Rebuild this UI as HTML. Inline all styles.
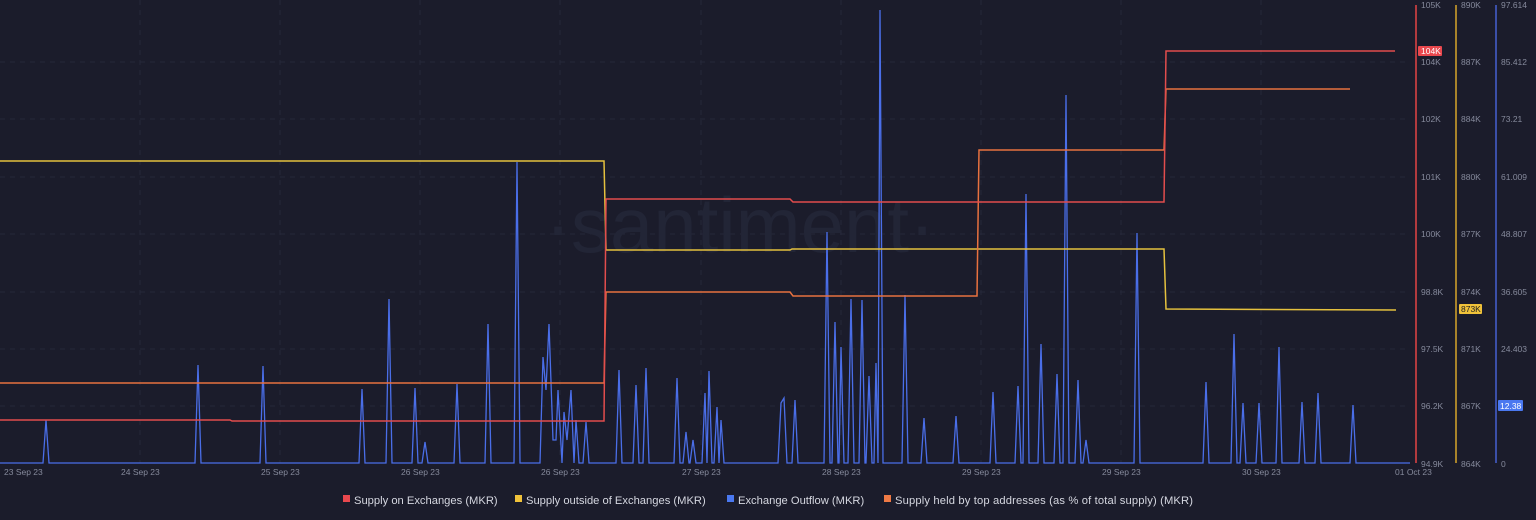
<!DOCTYPE html>
<html><head><meta charset="utf-8"><style>
html,body{margin:0;padding:0;background:#1b1c2b;width:1536px;height:520px;overflow:hidden;font-family:"Liberation Sans",sans-serif}
svg text{font-family:"Liberation Sans",sans-serif}
</style></head><body>
<svg width="1536" height="520" xmlns="http://www.w3.org/2000/svg">
<rect width="1536" height="520" fill="#1b1c2b"/>
<g stroke="#262839" stroke-width="1" stroke-dasharray="5,5">
<line x1="0" y1="62" x2="1410" y2="62"/><line x1="0" y1="119" x2="1410" y2="119"/><line x1="0" y1="177" x2="1410" y2="177"/><line x1="0" y1="234" x2="1410" y2="234"/><line x1="0" y1="292" x2="1410" y2="292"/><line x1="0" y1="349" x2="1410" y2="349"/><line x1="0" y1="406" x2="1410" y2="406"/>
<line x1="140" y1="0" x2="140" y2="463"/><line x1="280" y1="0" x2="280" y2="463"/><line x1="420" y1="0" x2="420" y2="463"/><line x1="560" y1="0" x2="560" y2="463"/><line x1="701" y1="0" x2="701" y2="463"/><line x1="841" y1="0" x2="841" y2="463"/><line x1="981" y1="0" x2="981" y2="463"/><line x1="1121" y1="0" x2="1121" y2="463"/><line x1="1261" y1="0" x2="1261" y2="463"/>
</g>
<text x="740" y="252" font-size="78" fill="#222536" text-anchor="middle" font-family="DejaVu Sans, sans-serif" font-weight="300">·santiment·</text>
<polyline fill="none" stroke="#4a6ee8" stroke-width="1.3" points="0,463 43,463 46,420 49,463 195,463 198,365 201,463 260,463 263,366 266,463 359,463 362,389 365,463 386,463 389,299 392,463 412,463 415,388 418,463 422,463 425,442 428,463 454,463 457,384 460,463 485,463 488,324 491,463 514,463 517,162 520,463 540,463 543,357 546,390 549,324 553,440 556,440 558,390 562,463 564,412 567,440 571,390 574,463 576,420 579,463 583,463 586,422 589,463 616,463 619,370 622,463 633,463 636,385 639,463 643,463 646,368 649,463 674,463 677,378 680,463 683,463 686,432 689,463 690,463 693,440 696,463 702,463 705,393 707,463 709,371 712,463 714,463 717,407 719,463 721,420 724,463 778,463 781,403 784,398 787,463 792,463 795,400 798,463 824,463 827,232 830,463 832,463 835,322 838,463 839,463 841,347 844,463 848,463 851,299 854,463 859,463 862,300 865,463 866,463 869,376 872,463 874,463 876,363 878,463 880,10 883,463 902,463 905,295 908,463 921,463 924,418 927,463 953,463 956,416 959,463 990,463 993,392 996,463 1015,463 1018,386 1021,463 1023,463 1026,194 1029,463 1038,463 1041,344 1044,463 1054,463 1057,374 1060,463 1063,463 1066,95 1069,463 1075,463 1078,380 1081,463 1083,463 1086,440 1089,463 1134,463 1137,233 1140,463 1203,463 1206,382 1209,463 1231,463 1234,334 1237,463 1240,463 1243,403 1246,463 1256,463 1259,403 1262,463 1276,463 1279,347 1282,463 1299,463 1302,402 1305,463 1315,463 1318,393 1321,463 1350,463 1353,405 1356,463 1410,463"/>
<polyline fill="none" stroke="#e5c13e" stroke-width="1.5" points="0,161 604,161 606,250 790,250 792,249 1164,249 1166,309 1396,310"/>
<polyline fill="none" stroke="#e8713f" stroke-width="1.5" points="0,383 604,383 606,292 790,292 793,296 977,296 979,150 1164,150 1166,89 1350,89"/>
<polyline fill="none" stroke="#e24d4d" stroke-width="1.5" points="0,420 230,420 232,421 604,421 606,199 790,199 793,202 1164,202 1166,51 1395,51"/>
<line x1="1416" y1="5" x2="1416" y2="463" stroke="#b23a3e" stroke-width="2"/>
<line x1="1456" y1="5" x2="1456" y2="463" stroke="#a8832a" stroke-width="2"/>
<line x1="1496" y1="5" x2="1496" y2="463" stroke="#3b4fa8" stroke-width="2"/>
<g font-size="8.5" fill="#868a9c">
<text x="1421" y="8">105K</text><text x="1421" y="65">104K</text><text x="1421" y="122">102K</text><text x="1421" y="180">101K</text><text x="1421" y="237">100K</text><text x="1421" y="295">98.8K</text><text x="1421" y="352">97.5K</text><text x="1421" y="409">96.2K</text><text x="1421" y="467">94.9K</text>
<text x="1461" y="8">890K</text><text x="1461" y="65">887K</text><text x="1461" y="122">884K</text><text x="1461" y="180">880K</text><text x="1461" y="237">877K</text><text x="1461" y="295">874K</text><text x="1461" y="352">871K</text><text x="1461" y="409">867K</text><text x="1461" y="467">864K</text>
<text x="1501" y="8">97.614</text><text x="1501" y="65">85.412</text><text x="1501" y="122">73.21</text><text x="1501" y="180">61.009</text><text x="1501" y="237">48.807</text><text x="1501" y="295">36.605</text><text x="1501" y="352">24.403</text><text x="1501" y="467">0</text>
<text x="4" y="475">23 Sep 23</text><text x="121" y="475">24 Sep 23</text><text x="261" y="475">25 Sep 23</text><text x="401" y="475">26 Sep 23</text><text x="541" y="475">26 Sep 23</text><text x="682" y="475">27 Sep 23</text><text x="822" y="475">28 Sep 23</text><text x="962" y="475">29 Sep 23</text><text x="1102" y="475">29 Sep 23</text><text x="1242" y="475">30 Sep 23</text><text x="1395" y="475">01 Oct 23</text>
</g>
<rect x="1418" y="46" width="24" height="10" rx="1" fill="#e9484e"/><text x="1421" y="54" font-size="8.5" fill="#fff">104K</text>
<rect x="1459" y="304" width="23" height="10" rx="1" fill="#f0c23a"/><text x="1461" y="312" font-size="8.5" fill="#222">873K</text>
<rect x="1498" y="400" width="25" height="11" rx="1" fill="#4a78f0"/><text x="1500" y="409" font-size="8.5" fill="#fff">12.38</text>
<g font-size="11.2" fill="#d5d7e0">
<rect x="343" y="495" width="7" height="7" fill="#e9484e"/><text x="354" y="504">Supply on Exchanges (MKR)</text>
<rect x="515" y="495" width="7" height="7" fill="#f0c23a"/><text x="526" y="504">Supply outside of Exchanges (MKR)</text>
<rect x="727" y="495" width="7" height="7" fill="#4a78f0"/><text x="738" y="504">Exchange Outflow (MKR)</text>
<rect x="884" y="495" width="7" height="7" fill="#ef7a45"/><text x="895" y="504" textLength="298">Supply held by top addresses (as % of total supply) (MKR)</text>
</g>
</svg>
</body></html>
